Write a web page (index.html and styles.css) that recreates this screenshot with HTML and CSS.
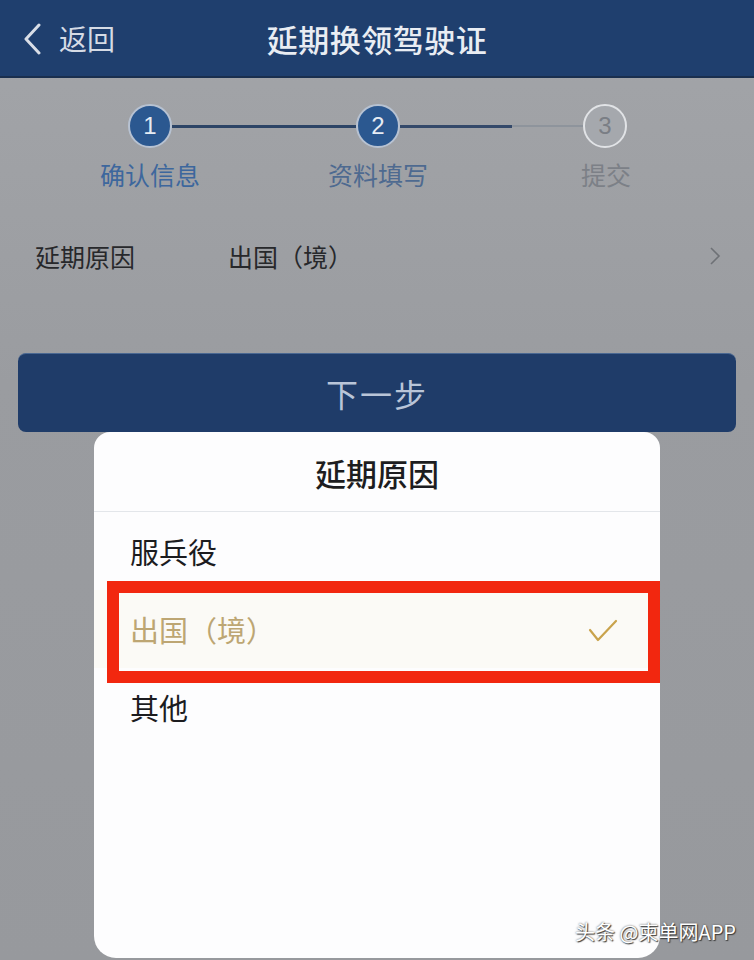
FILE: index.html
```html
<!DOCTYPE html>
<html lang="zh-CN">
<head>
  <meta charset="UTF-8">
  <meta name="viewport" content="width=device-width, initial-scale=1.0">
  <title>延期换领驾驶证</title>
  <link rel="stylesheet" href="styles.css">
</head>
<body>
  <div class="screen">
    <header class="topbar">
      <div class="back">
        <svg class="back-icon" width="20" height="32" viewBox="0 0 20 32">
          <polyline points="17,2 4,16 17,30" fill="none" stroke="#d9dee7" stroke-width="3" stroke-linecap="round" stroke-linejoin="round"/>
        </svg>
        <span>返回</span>
      </div>
      <h1 class="title">延期换领驾驶证</h1>
    </header>

    <section class="steps">
      <div class="step-track">
        <span class="dot active">1</span>
        <span class="line done"></span>
        <span class="dot active">2</span>
        <span class="line half"></span>
        <span class="line todo"></span>
        <span class="dot pending">3</span>
      </div>
      <div class="step-labels">
        <span class="label first">确认信息</span>
        <span class="label second">资料填写</span>
        <span class="label third">提交</span>
      </div>
    </section>

    <div class="field-row">
      <span class="field-name">延期原因</span>
      <span class="field-value">出国（境）</span>
      <svg class="chev" width="12" height="20" viewBox="0 0 12 20">
        <polyline points="2,2 10,10 2,18" fill="none" stroke="#6e7176" stroke-width="1.6"/>
      </svg>
    </div>

    <div class="actions">
      <button class="next-btn">下一步</button>
    </div>

    <div class="sheet">
      <div class="sheet-title">延期原因</div>
      <ul class="options">
        <li class="option">服兵役</li>
        <li class="option selected">
          <span>出国（境）</span>
          <svg class="check" width="30" height="24" viewBox="0 0 30 24">
            <polyline points="2,11 10,21 28,2" fill="none" stroke="#c9a34c" stroke-width="2.2" stroke-linecap="round" stroke-linejoin="round"/>
          </svg>
        </li>
        <li class="option">其他</li>
      </ul>
    </div>

    <div class="highlight"></div>

    <div class="watermark">头条 @柬单网APP</div>
  </div>
</body>
</html>
```

FILE: styles.css
```css
* {
  box-sizing: border-box;
}
body {
  margin: 0;
  font-family: "Noto Sans CJK SC", "Noto Sans", sans-serif;
  background: #9b9da1;
}
.screen {
  position: relative;
  width: 754px;
  height: 960px;
  overflow: hidden;
  background: linear-gradient(#a3a5a9, #9a9ca0 40%, #97999d);
}
.topbar {
  height: 78px;
  background: #1f3f6e;
  border-bottom: 2px solid #1a2f4e;
  display: flex;
  align-items: center;
  justify-content: center;
  position: relative;
}
.back {
  position: absolute;
  left: 22px;
  top: 0;
  height: 76px;
  display: flex;
  align-items: center;
  gap: 17px;
  color: #d5dbe5;
  font-size: 28px;
}
.back-icon {
  margin-top: 2px;
}
.title {
  margin: 0;
  font-size: 31px;
  font-weight: 500;
  color: #e9edf3;
  letter-spacing: 0.5px;
}
.steps {
  padding-top: 26px;
}
.step-track {
  display: flex;
  align-items: center;
  padding-left: 128px;
  width: 754px;
}
.dot {
  width: 44px;
  height: 44px;
  border-radius: 50%;
  display: flex;
  align-items: center;
  justify-content: center;
  font-family: "Liberation Sans", sans-serif;
  font-size: 24px;
  flex-shrink: 0;
}
.dot.active {
  background: #2b5890;
  color: #e6ecf4;
  border: 2px solid #b7c2d2;
}
.dot.pending {
  background: #a5a8ad;
  color: #7a7e85;
  border: 2px solid #e1e3e6;
}
.line {
  height: 3px;
}
.line.done {
  width: 184px;
  background: #2c4466;
}
.line.half {
  width: 112px;
  background: #34496a;
}
.line.todo {
  width: 71px;
  background: #8e949c;
  height: 2px;
}
.step-labels {
  position: relative;
  height: 52px;
  margin-top: 8px;
}
.label {
  position: absolute;
  top: 0;
  font-size: 25px;
  transform: translateX(-50%);
  white-space: nowrap;
}
.label.first {
  left: 150px;
  color: #3d679d;
}
.label.second {
  left: 378px;
  color: #4e6a90;
}
.label.third {
  left: 606px;
  color: #7c8087;
}
.field-row {
  display: flex;
  align-items: center;
  height: 76px;
  margin-top: 10px;
  padding-left: 35px;
  padding-right: 33px;
  font-size: 25px;
  color: #27282b;
}
.field-name {
  width: 193px;
}
.field-value {
  flex: 1;
}
.actions {
  padding: 59px 18px 0;
}
.next-btn {
  width: 100%;
  height: 79px;
  border: none;
  border-radius: 8px;
  background: #1f3c69;
  color: #b9c5d8;
  font-family: "Noto Sans CJK SC", sans-serif;
  font-size: 32px;
  letter-spacing: 2px;
  border-top: 1px solid #4a6892;
}
.sheet {
  position: absolute;
  left: 94px;
  top: 432px;
  width: 566px;
  height: 526px;
  background: #fdfdfe;
  border-radius: 16px 16px 22px 22px;
}
.sheet-title {
  height: 80px;
  display: flex;
  align-items: center;
  justify-content: center;
  font-size: 31px;
  font-weight: 500;
  color: #1d1d20;
  border-bottom: 1px solid #e3e6ea;
  padding-top: 2px;
}
.options {
  list-style: none;
  margin: 0;
  padding: 0;
}
.option {
  height: 78px;
  display: flex;
  align-items: center;
  justify-content: space-between;
  padding-left: 36px;
  padding-right: 42px;
  font-size: 29px;
  color: #1c1c1f;
}
.option.selected {
  color: #bda673;
  background: #fbfaf6;
}
.check {
  margin-top: 4px;
}
.highlight {
  position: absolute;
  left: 107px;
  top: 581px;
  width: 553px;
  height: 102px;
  border: 12px solid #f2270f;
}
.watermark {
  position: absolute;
  right: 18px;
  bottom: 14px;
  font-size: 20px;
  color: #ffffff;
  text-shadow: 1px 1px 1px #3a3a3a, 0 0 2px #555;
}
```
